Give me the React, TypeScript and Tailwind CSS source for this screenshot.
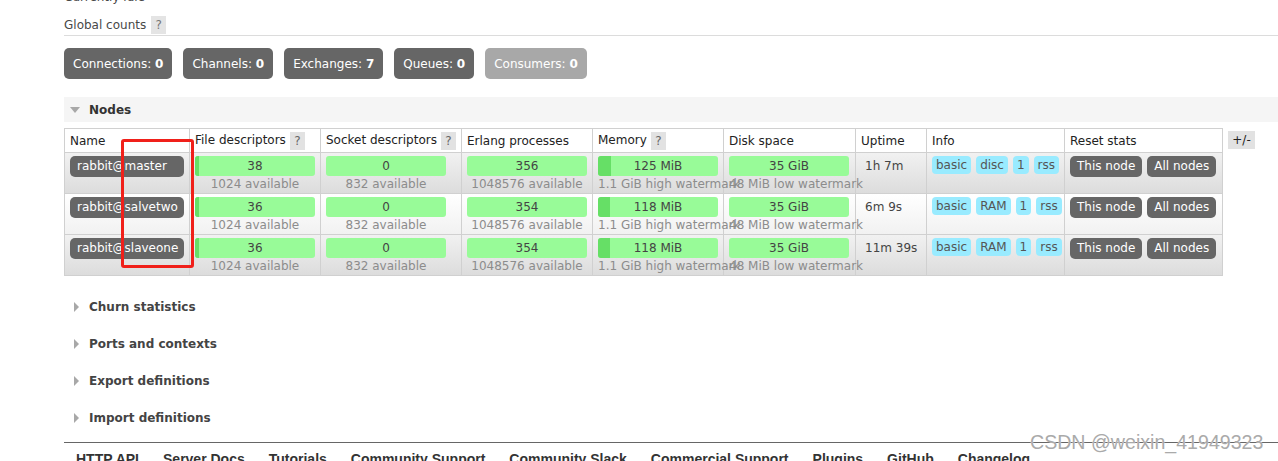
import React from "react";

type Node = {
  name: string;
  fd: string;
  fdPct: number;
  sd: string;
  ep: string;
  mem: string;
  memPct: number;
  disk: string;
  uptime: string;
  info: string[];
  rowBg: string;
};

const nodes: Node[] = [
  { name: "rabbit@master", fd: "38", fdPct: 3, sd: "0", ep: "356", mem: "125 MiB", memPct: 11, disk: "35 GiB", uptime: "1h 7m", info: ["basic", "disc", "1", "rss"], rowBg: "bg-gradient-to-b from-[#f1f1f1] to-[#dcdcdc]" },
  { name: "rabbit@salvetwo", fd: "36", fdPct: 3, sd: "0", ep: "354", mem: "118 MiB", memPct: 10, disk: "35 GiB", uptime: "6m 9s", info: ["basic", "RAM", "1", "rss"], rowBg: "bg-gradient-to-b from-white to-[#f1f1f1]" },
  { name: "rabbit@slaveone", fd: "36", fdPct: 3, sd: "0", ep: "354", mem: "118 MiB", memPct: 10, disk: "35 GiB", uptime: "11m 39s", info: ["basic", "RAM", "1", "rss"], rowBg: "bg-gradient-to-b from-[#f1f1f1] to-[#dcdcdc]" },
];

function Bar({ value, pct, sub }: { value: string; pct: number; sub: string }) {
  return (
    <div className="w-[120px]">
      <div className="relative h-[20px] rounded-[3px] bg-[#98fb98] overflow-hidden">
        {pct > 0 && (
          <div className="absolute left-0 top-0 h-full bg-[#66df66]" style={{ width: `${pct}%` }} />
        )}
        <div className="relative text-center leading-[20px] text-[#444]">{value}</div>
      </div>
      <div className="text-center whitespace-nowrap leading-[17px] text-[#8c8c8c]">{sub}</div>
    </div>
  );
}

function Help() {
  return (
    <span className="inline-flex items-center justify-center w-[15px] h-[18px] bg-[#e2e2e2] text-[#666] ml-[4px] align-middle">?</span>
  );
}

function RightTri() {
  return (
    <svg width="5" height="10" viewBox="0 0 5 10" className="mr-[10px] ml-[10px]">
      <path d="M0 0 L5 5 L0 10 Z" fill="#a8a8a8" />
    </svg>
  );
}

export default function App() {
  const headCell = "border border-[#d0d0d0] px-[5px] h-[24px] text-left font-normal text-[#222] whitespace-nowrap";
  const cell = "border border-[#d0d0d0] px-[5px] pt-[3px] align-top h-[41px]";
  return (
    <div className="relative w-[1278px] h-[461px] overflow-hidden bg-white font-['DejaVu_Sans',sans-serif] text-[12px] text-[#484848]">
      <div className="pl-[64px] -mt-[11px]">
        <div className="h-[17px] leading-[17px]">Currently idle</div>
        <div className="mt-[10px] pb-[1px] border-b border-[#dcdcdc]">
          <div className="h-[18px] flex items-center">
            <span>Global counts</span>
            <span className="inline-flex items-center justify-center w-[15px] h-[18px] bg-[#e4e4e4] text-[#777] ml-[5px]">?</span>
          </div>
        </div>

        <div className="mt-[12px] flex gap-[11px] h-[31px]">
          {[
            ["Connections:", "0", "bg-[#666666]"],
            ["Channels:", "0", "bg-[#666666]"],
            ["Exchanges:", "7", "bg-[#666666]"],
            ["Queues:", "0", "bg-[#666666]"],
            ["Consumers:", "0", "bg-[#a8a8a8]"],
          ].map(([l, n, bg]) => (
            <div key={l} className={`${bg} rounded-[5px] px-[9px] flex items-center text-white whitespace-nowrap`}>
              {l}&nbsp;<b>{n}</b>
            </div>
          ))}
        </div>

        <div className="mt-[18px] h-[25px] bg-[#f5f5f5] flex items-center">
          <svg width="10" height="6" viewBox="0 0 10 6" className="ml-[6px] mr-[9px]">
            <path d="M0 0 L10 0 L5 6 Z" fill="#a8a8a8" />
          </svg>
          <span className="font-bold text-[#333]">Nodes</span>
        </div>

        <div className="mt-[6px] flex items-start">
          <table className="border-collapse table-fixed w-[1158px]">
            <colgroup>
              <col className="w-[125px]" />
              <col className="w-[131px]" />
              <col className="w-[141px]" />
              <col className="w-[131px]" />
              <col className="w-[131px]" />
              <col className="w-[132px]" />
              <col className="w-[71px]" />
              <col className="w-[138px]" />
              <col className="w-[158px]" />
            </colgroup>
            <thead>
              <tr className="bg-white">
                <th className={headCell}>Name</th>
                <th className={headCell}>File descriptors<Help /></th>
                <th className={headCell}>Socket descriptors<Help /></th>
                <th className={headCell}>Erlang processes</th>
                <th className={headCell}>Memory<Help /></th>
                <th className={headCell}>Disk space</th>
                <th className={headCell}>Uptime</th>
                <th className={headCell}>Info</th>
                <th className={headCell}>Reset stats</th>
              </tr>
            </thead>
            <tbody>
              {nodes.map((n) => (
                <tr key={n.name} className={n.rowBg}>
                  <td className={cell}>
                    <div className="inline-block h-[21px] leading-[21px] w-[114px] rounded-[5px] bg-[#666666] text-white px-[7px] whitespace-nowrap">{n.name}</div>
                  </td>
                  <td className={cell}><Bar value={n.fd} pct={n.fdPct} sub="1024 available" /></td>
                  <td className={cell}><Bar value={n.sd} pct={0} sub="832 available" /></td>
                  <td className={cell}><Bar value={n.ep} pct={0} sub="1048576 available" /></td>
                  <td className={cell}><Bar value={n.mem} pct={n.memPct} sub="1.1 GiB high watermark" /></td>
                  <td className={cell}><Bar value={n.disk} pct={0} sub="48 MiB low watermark" /></td>
                  <td className={`${cell} !pl-[9px]`}>
                    <div className="leading-[20px] whitespace-nowrap text-[#444]">{n.uptime}</div>
                  </td>
                  <td className={cell}>
                    <div className="flex gap-[5px]">
                      {n.info.map((b, i) => (
                        <span key={i} className="h-[18px] leading-[18px] px-[4px] rounded-[4px] bg-[#99ebff] text-[#555]">{b}</span>
                      ))}
                    </div>
                  </td>
                  <td className={cell}>
                    <div className="flex gap-[5px]">
                      <span className="h-[21px] leading-[21px] px-[7px] rounded-[5px] bg-[#666666] text-white whitespace-nowrap">This node</span>
                      <span className="h-[21px] leading-[21px] px-[7px] rounded-[5px] bg-[#666666] text-white whitespace-nowrap">All nodes</span>
                    </div>
                  </td>
                </tr>
              ))}
            </tbody>
          </table>
          <div className="ml-[5px] mt-[3px] h-[18px] w-[27px] bg-[#e2e2e2] text-[#222] flex items-center justify-center">+/-</div>
        </div>

        <div className="mt-[12px]">
          {["Churn statistics", "Ports and contexts", "Export definitions", "Import definitions"].map((s) => (
            <div key={s} className="h-[37px] flex items-center">
              <RightTri />
              <span className="font-bold text-[#444]">{s}</span>
            </div>
          ))}
        </div>

        <div className="mt-[6px] border-t border-[#666666]">
          <div className="flex pt-[8px] font-['Liberation_Sans',sans-serif] font-bold text-[14px] leading-[16px] text-[#333]">
            {["HTTP API", "Server Docs", "Tutorials", "Community Support", "Community Slack", "Commercial Support", "Plugins", "GitHub", "Changelog"].map((l) => (
              <span key={l} className="px-[12px] whitespace-nowrap">{l}</span>
            ))}
          </div>
        </div>
      </div>

      <div className="absolute left-[121px] top-[139px] w-[73px] h-[129px] border-[3px] border-[#f0201a] rounded-[3px]" />

      <div className="absolute left-[1030px] top-[430px] font-['Liberation_Sans',sans-serif] text-[19.6px] leading-[24px] text-[#aaaaaa] whitespace-nowrap [text-shadow:0_0_1px_#ffffff]">
        CSDN @weixin_41949323
      </div>
    </div>
  );
}
